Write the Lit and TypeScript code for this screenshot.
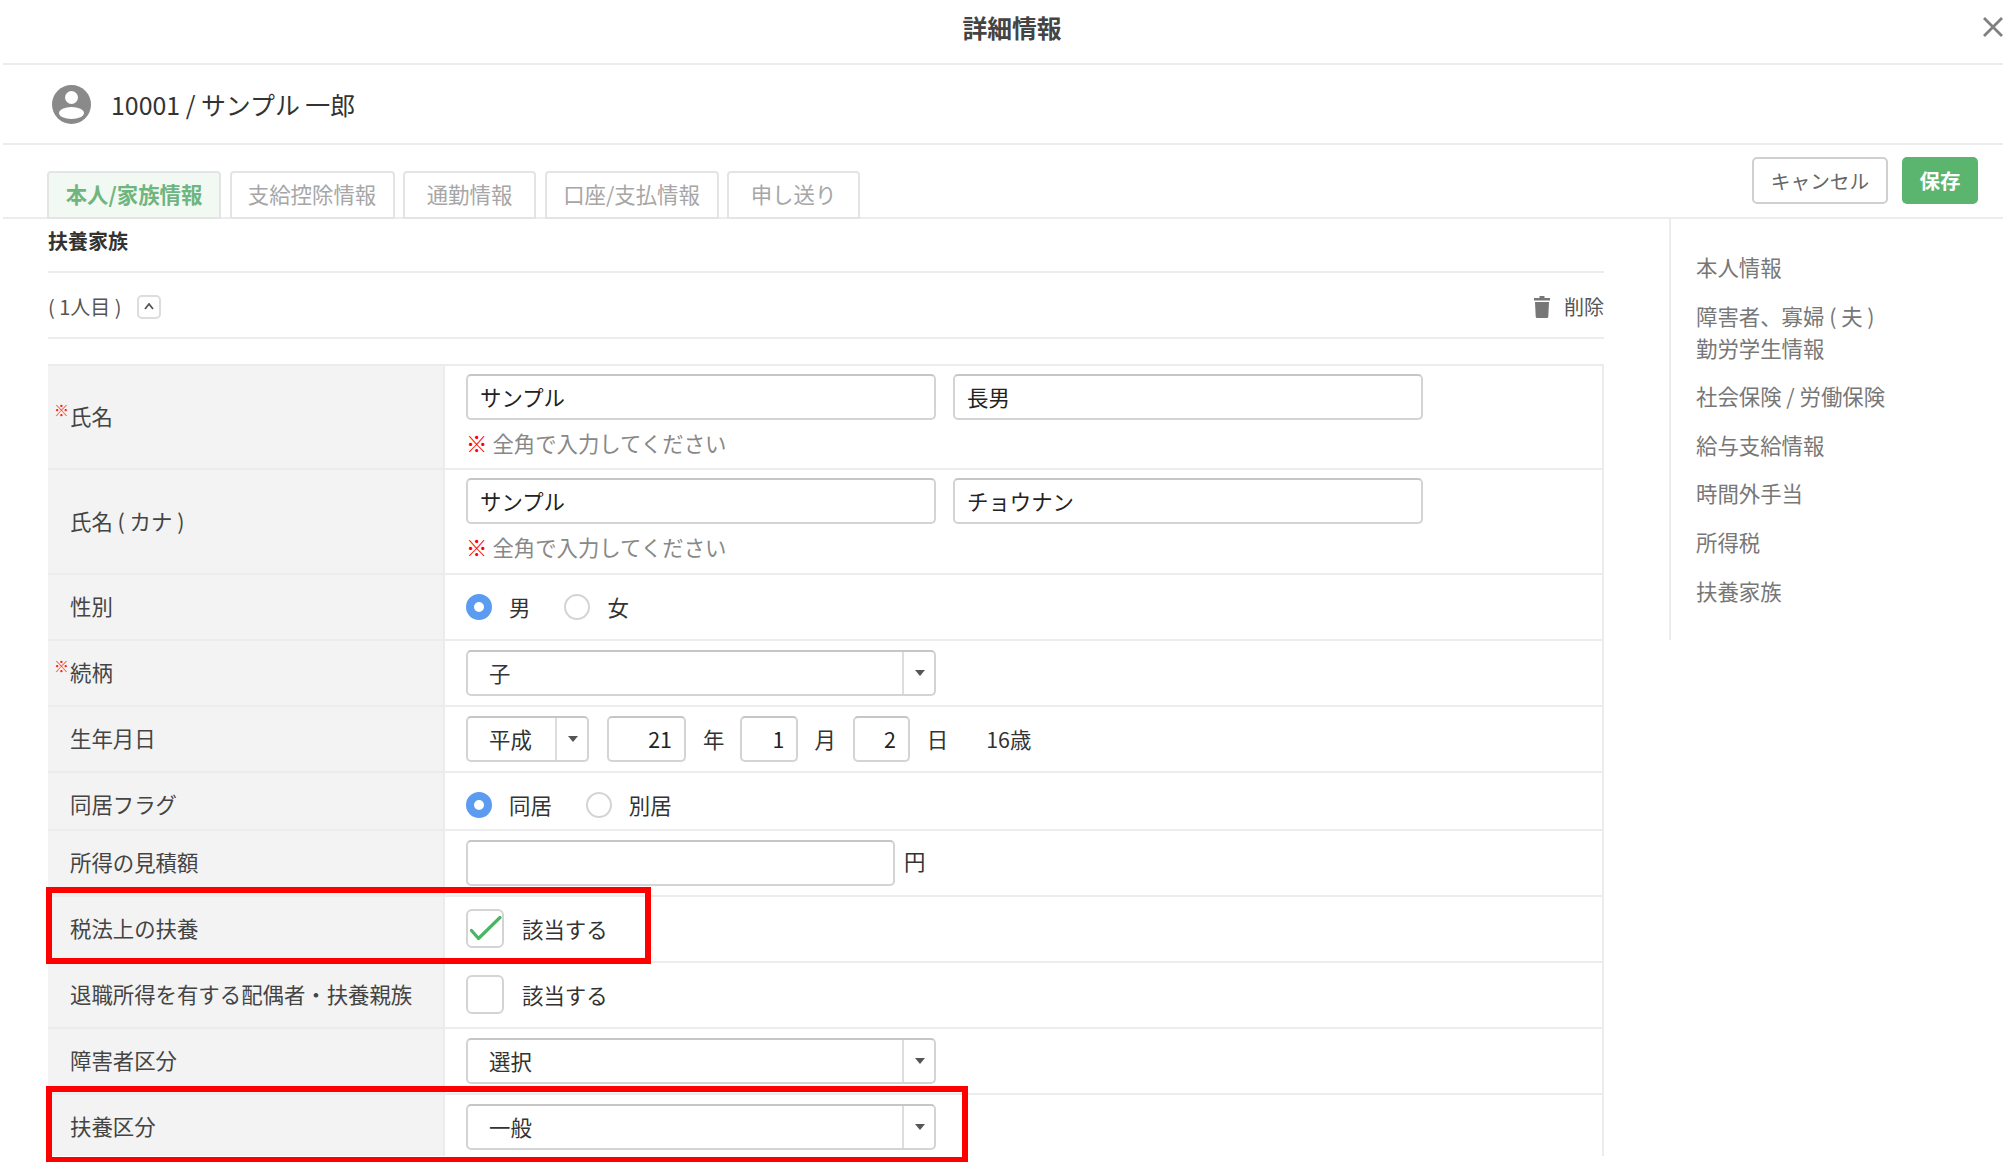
import { LitElement, html, css } from "lit";
import { customElement } from "lit/decorators.js";

const caret = html`<svg class="caret" width="10" height="6" viewBox="0 0 10 6"><path d="M0 0h10L5 6z" fill="#555"/></svg>`;

@customElement("app-root")
export class AppRoot extends LitElement {
  static styles = css`
    :host { display: block; width: 2003px; height: 1162px; overflow: hidden; background: #fff; color: #333;
      font-family: "Noto Sans CJK JP", "Noto Sans", sans-serif; font-size: 21.4px; line-height: 1.3; }
    * { box-sizing: border-box; }
    .head { height: 65px; margin-left: 3px; border-bottom: 2px solid #ececec; position: relative; display: flex; align-items: center; justify-content: center; }
    .head h1 { margin: 0 0 0 18px; font-size: 24.8px; font-weight: 700; color: #444; padding-bottom: 8px; }
    .close { position: absolute; right: 0; top: 17px; width: 20px; height: 20px; }
    .user { height: 80px; margin-left: 3px; border-bottom: 2px solid #ececec; display: flex; align-items: center; gap: 20px; padding-left: 49px; font-size: 24.9px; color: #333; }
    .bar { height: 74px; margin-left: 3px; border-bottom: 2px solid #ececec; display: flex; align-items: flex-end; justify-content: space-between; padding: 0 25px 0 44px; }
    .tabs { display: flex; gap: 8.5px; margin-bottom: -2px; }
    .tab { height: 48px; border: 2px solid #e4e4e4; border-radius: 4px 4px 0 0; display: flex; align-items: center; justify-content: center; color: #a6a6a6; font-size: 21.4px; padding-bottom: 2px; }
    .tab.on { background: #f2f9f3; color: #6fb57f; font-weight: 700; }
    .btns { display: flex; gap: 14px; align-self: flex-start; margin-top: 12px; }
    .btn { height: 47px; border-radius: 5px; display: flex; align-items: center; justify-content: center; font-size: 20.5px; }
    .cancel { width: 136px; border: 2px solid #d0d0d0; color: #666; font-size: 19.7px; }
    .save { width: 76px; background: #5cb56e; color: #fff; font-weight: 700; }
    .main { display: flex; }
    .content { width: 1556px; margin-left: 48px; flex: none; }
    .title { height: 54px; border-bottom: 2px solid #ececec; font-size: 20px; font-weight: 700; color: #333; display: flex; align-items: center; padding-bottom: 8px; }
    .person { height: 66px; border-bottom: 2px solid #ececec; display: flex; align-items: center; justify-content: space-between; color: #555; padding-top: 3px; font-size: 20px; }
    .pl { display: flex; align-items: center; gap: 15px; }
    .toggle { width: 24px; height: 24px; border: 2px solid #ddd; border-radius: 5px; display: flex; align-items: center; justify-content: center; }
    .del { display: flex; align-items: center; gap: 14px; }
    .table { margin-top: 25px; border-top: 2px solid #ececec; border-right: 2px solid #ececec; }
    .row { display: flex; border-bottom: 2px solid #ececec; position: relative; }
    .row.last { border-bottom: 0; }
    .label { width: 397px; flex: none; background: #f3f3f3; display: flex; align-items: center; padding: 0 0 2px 22px; color: #444; position: relative; border-right: 2px solid #ececec; }
    .req { position: absolute; left: 6px; top: calc(50% - 17px); color: #f22; font-size: 15px; }
    .val { flex: 1; padding: 0 0 1px 21px; display: flex; align-items: center; gap: 0; }
    .stack { flex-direction: column; align-items: flex-start; justify-content: flex-start; padding-top: 8px; }
    .row.low .label { padding-top: 8px; }
    .row.low .val { padding-top: 8px; }
    .row.last .label { padding-top: 3px; }
    .row.last .val { padding-top: 4px; }
    .inputs { display: flex; gap: 17px; }
    .input { height: 46px; border: 2px solid #d4d4d4; border-top-color: #c6c6c6; border-radius: 5px; display: flex; align-items: center; padding: 0 12px; color: #222; }
    .w470 { width: 470px; }
    .note { color: #888; margin-top: 9px; height: 27px; display: flex; align-items: center; }
    .note b { color: #f00; font-weight: 400; margin-right: 5px; }
    .radio { width: 26px; height: 26px; border-radius: 50%; border: 2px solid #d4d4d4; flex: none; }
    .radio.on { border: 8px solid #5b9bf0; }
    .rl { margin: 0 34px 0 17px; }
    .select { height: 46px; border: 2px solid #d4d4d4; border-top-color: #c6c6c6; border-radius: 5px; display: flex; align-items: stretch; color: #333; }
    .select span { flex: 1; display: flex; align-items: center; padding-left: 21px; }
    .select i { width: 32px; border-left: 2px solid #ddd; padding-left: 2px; display: flex; align-items: center; justify-content: center; flex: none; }
    .num { justify-content: flex-end; }
    .yen { margin-left: 9px; padding-bottom: 3px; }
    .check { width: 38px; height: 39px; border: 2px solid #d4d4d4; border-radius: 6px; display: flex; align-items: center; justify-content: center; flex: none; margin-right: 18px; }
    .mark { position: absolute; border: 6px solid #f00; pointer-events: none; z-index: 2; }
    .side { margin-left: 65px; width: 334px; height: 421px; border-left: 2px solid #ececec; padding: 32px 0 0 25px; color: #777; line-height: 32px; font-size: 21.4px; }
    .side div { margin-bottom: 16.6px; }
  `;

  private row(label: string, body: unknown, h: number, extra = "", req = false, mark?: string, rowClass = "") {
    return html`<div class="row ${rowClass}" style="height:${h}px">
      <div class="label">${req ? html`<span class="req">※</span>` : ""}${label}</div>
      <div class="val ${extra}">${body}</div>
      ${mark ? html`<div class="mark" style="${mark}"></div>` : ""}
    </div>`;
  }

  private sel(v: string, w: number) {
    return html`<div class="select" style="width:${w}px"><span>${v}</span><i>${caret}</i></div>`;
  }

  private radio(a: string, b: string) {
    return html`<div class="radio on"></div><span class="rl">${a}</span><div class="radio"></div><span class="rl">${b}</span>`;
  }

  private names(a: string, b: string) {
    return html`<div class="inputs"><div class="input w470">${a}</div><div class="input w470">${b}</div></div>
      <div class="note"><b>※</b>全角で入力してください</div>`;
  }

  render() {
    return html`
      <div class="head"><h1>詳細情報</h1>
        <svg class="close" viewBox="0 0 20 20"><path d="M1 1l18 18M19 1L1 19" stroke="#808080" stroke-width="2.800" fill="none"/></svg></div>
      <div class="user">
        <svg width="39" height="39" viewBox="0 0 39 39"><circle cx="19.5" cy="19.5" r="19.5" fill="#8a8a8a"/><circle cx="19.500" cy="12.500" r="6.500" fill="#fff"/><ellipse cx="19.500" cy="28" rx="12.500" ry="6" fill="#fff"/></svg>
        <span>10001 / サンプル 一郎</span>
      </div>
      <div class="bar">
        <div class="tabs">
          <div class="tab on" style="width:174px">本人/家族情報</div>
          <div class="tab" style="width:165px">支給控除情報</div>
          <div class="tab" style="width:133px">通勤情報</div>
          <div class="tab" style="width:174px">口座/支払情報</div>
          <div class="tab" style="width:133px">申し送り</div>
        </div>
        <div class="btns"><div class="btn cancel">キャンセル</div><div class="btn save">保存</div></div>
      </div>
      <div class="main">
        <div class="content">
          <div class="title">扶養家族</div>
          <div class="person">
            <div class="pl">( 1人目 )
              <div class="toggle"><svg width="10" height="7" viewBox="0 0 10 7"><path d="M1 6l4-5 4 5" fill="none" stroke="#555" stroke-width="1.800"/></svg></div></div>
            <div class="del">
              <svg width="16" height="22" viewBox="0 0 16 22"><path d="M5.500 0h5v2H16v2.500H0V2h5.500zM1 6h14l-.7 14.500a1.500 1.500 0 0 1-1.500 1.500H3.200a1.500 1.500 0 0 1-1.500-1.500z" fill="#777"/></svg>
              <span>削除</span></div>
          </div>
          <div class="table">
            ${this.row("氏名", this.names("サンプル", "長男"), 104, "stack", true)}
            ${this.row("氏名 ( カナ )", this.names("サンプル", "チョウナン"), 105, "stack")}
            ${this.row("性別", this.radio("男", "女"), 66)}
            ${this.row("続柄", this.sel("子", 470), 66, "", true)}
            ${this.row("生年月日", html`${this.sel("平成", 123)}
              <div class="input num" style="width:79px;margin-left:18px">21</div><span style="margin:0 16px 0 17px">年</span>
              <div class="input num" style="width:58px">1</div><span style="margin:0 17px 0 16px">月</span>
              <div class="input num" style="width:57px">2</div><span style="margin:0 0 0 17px">日</span>
              <span style="margin-left:38px">16歳</span>`, 66)}
            ${this.row("同居フラグ", this.radio("同居", "別居"), 58, "", false, undefined, "low")}
            ${this.row("所得の見積額", html`<div class="input" style="width:429px"></div><span class="yen">円</span>`, 66)}
            ${this.row("税法上の扶養", html`<div class="check"><svg width="34" height="35" viewBox="0 0 34 35"><path d="M3.500 19.500l7 8L32 6.500" fill="none" stroke="#4cb565" stroke-width="3.200" stroke-linecap="round" stroke-linejoin="round"/></svg></div>該当する`, 66, "", false, "left:-2px;top:-10px;width:605px;height:77px")}
            ${this.row("退職所得を有する配偶者・扶養親族", html`<div class="check"></div>該当する`, 66)}
            ${this.row("障害者区分", this.sel("選択", 470), 66)}
            ${this.row("扶養区分", this.sel("一般", 470), 61, "", false, "left:-2px;top:-9px;width:922px;height:77px", "last")}
          </div>
        </div>
        <div class="side">
          <div>本人情報</div>
          <div>障害者、寡婦 ( 夫 )<br />勤労学生情報</div>
          <div>社会保険 / 労働保険</div>
          <div>給与支給情報</div>
          <div>時間外手当</div>
          <div>所得税</div>
          <div>扶養家族</div>
        </div>
      </div>`;
  }
}
